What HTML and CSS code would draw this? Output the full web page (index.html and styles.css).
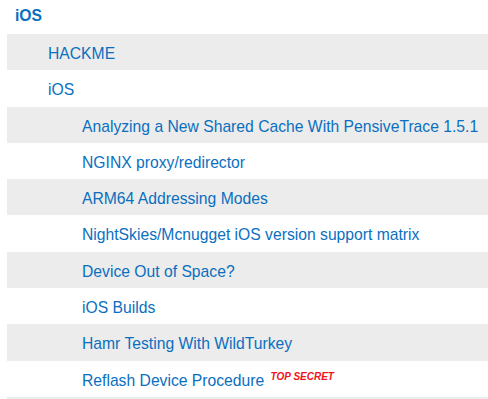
FILE: index.html
```html
<!DOCTYPE html>
<html lang="en">
<head>
    <meta charset="UTF-8">
    <title>iOS</title>
    <link rel="stylesheet" href="styles.css">
</head>
<body>
    <div class="tree">
        <a class="tree-title" href="#">iOS</a>
        <ul class="tree-list">
            <li class="row level-1"><a href="#">HACKME</a></li>
            <li class="row level-1"><a href="#">iOS</a></li>
            <li class="row level-2"><a href="#">Analyzing a New Shared Cache With PensiveTrace 1.5.1</a></li>
            <li class="row level-2"><a href="#">NGINX proxy/redirector</a></li>
            <li class="row level-2"><a href="#">ARM64 Addressing Modes</a></li>
            <li class="row level-2"><a href="#">NightSkies/Mcnugget iOS version support matrix</a></li>
            <li class="row level-2"><a href="#">Device Out of Space?</a></li>
            <li class="row level-2"><a href="#">iOS Builds</a></li>
            <li class="row level-2"><a href="#">Hamr Testing With WildTurkey</a></li>
            <li class="row level-2"><a href="#">Reflash Device Procedure</a> <sup class="tag-secret">TOP SECRET</sup></li>
            <li class="row level-2"></li>
        </ul>
    </div>
</body>
</html>
```

FILE: styles.css
```css
body {
    margin: 0;
    padding: 0;
    background-color: #fff;
    font-family: "Liberation Sans", Arial, sans-serif;
    font-size: 15.7px;
}
a {
    color: #0a6fbf;
    text-decoration: none;
}
.tree {
    padding-left: 7px;
}
.tree-title {
    display: block;
    padding: 6px 0 8px 8px;
    line-height: 20px;
    font-weight: bold;
}
.tree-list {
    list-style: none;
    margin: 0;
    padding: 0;
}
.row {
    height: 33.3px;
    padding-top: 3px;
    line-height: 33.3px;
    white-space: nowrap;
}
.row:nth-child(odd) {
    background-color: #ececec;
}
.level-1 {
    padding-left: 41px;
}
.level-2 {
    padding-left: 75px;
}
.tag-secret {
    color: #f0141e;
    font-size: 10px;
    font-weight: bold;
    font-style: italic;
    margin-left: 2px;
    vertical-align: 6px;
    line-height: 1;
}
```
